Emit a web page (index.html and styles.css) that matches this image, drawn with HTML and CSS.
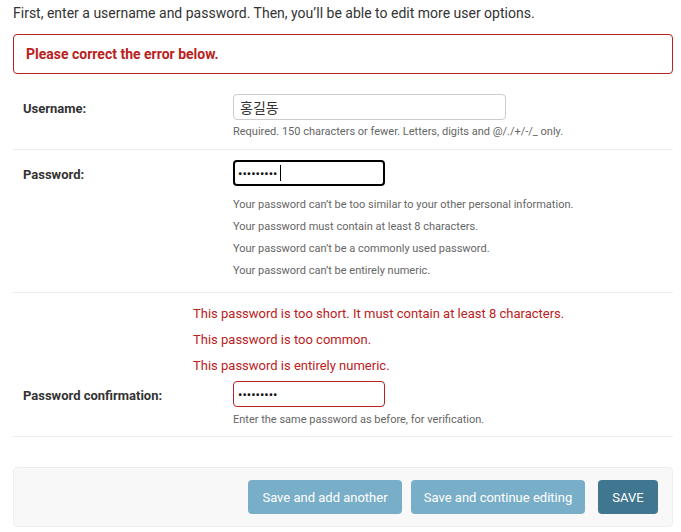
FILE: index.html
```html
<!DOCTYPE html>
<html>
<head>
<meta charset="utf-8">
<link rel="stylesheet" href="styles.css">
</head>
<body>
<div class="content">
  <p class="intro">First, enter a username and password. Then, you’ll be able to edit more user options.</p>
  <p class="errornote">Please correct the error below.</p>
  <fieldset class="module">
    <div class="form-row">
      <label class="field-label">Username:</label>
      <div class="field">
        <input class="text-input username" type="text" value="홍길동">
        <div class="help">Required. 150 characters or fewer. Letters, digits and @/./+/-/_ only.</div>
      </div>
    </div>
    <div class="form-row">
      <label class="field-label">Password:</label>
      <div class="field">
        <div class="input-wrap">
          <input class="text-input pw focused" type="password" value="123456789"><span class="caret"></span>
        </div>
        <ul class="help help-list">
          <li>Your password can’t be too similar to your other personal information.</li>
          <li>Your password must contain at least 8 characters.</li>
          <li>Your password can’t be a commonly used password.</li>
          <li>Your password can’t be entirely numeric.</li>
        </ul>
      </div>
    </div>
    <div class="form-row errors">
      <ul class="errorlist">
        <li>This password is too short. It must contain at least 8 characters.</li>
        <li>This password is too common.</li>
        <li>This password is entirely numeric.</li>
      </ul>
      <div class="row-inner">
        <label class="field-label">Password confirmation:</label>
        <div class="field">
          <input class="text-input pw error" type="password" value="123456789">
          <div class="help help-last">Enter the same password as before, for verification.</div>
        </div>
      </div>
    </div>
  </fieldset>
  <div class="submit-row">
    <button class="btn light w-add">Save and add another</button>
    <button class="btn light w-cont">Save and continue editing</button>
    <button class="btn default">SAVE</button>
  </div>
</div>
</body>
</html>
```
FILE: styles.css
```css
html, body {
  margin: 0;
  padding: 0;
  background: #fff;
  font-family: Roboto, "Liberation Sans", "Noto Sans CJK KR", sans-serif;
  color: #333;
}
.content {
  padding: 0 8px 0 13px;
}
.intro {
  margin: 0;
  padding-top: 4px;
  font-size: 14px;
  line-height: 18px;
  color: #333;
}
.errornote {
  margin: 12px 0 10px 0;
  border: 1px solid #ba2121;
  border-radius: 4px;
  color: #ba2121;
  font-size: 14px;
  font-weight: bold;
  padding: 11px 12px 11px 12px;
  line-height: 16px;
}
.module {
  border: none;
  margin: 0;
  padding: 0;
}
.form-row {
  display: flex;
  padding: 10px 10px;
  border-bottom: 1px solid #eee;
}
.form-row.errors {
  display: block;
}
.row-inner {
  display: flex;
}
.field-label {
  width: 210px;
  flex: none;
  font-size: 13px;
  font-weight: bold;
  color: #333;
  padding-top: 7px;
  line-height: 16px;
}
.field {
  display: flex;
  flex-direction: column;
  align-items: flex-start;
}
.text-input {
  box-sizing: border-box;
  height: 26px;
  border: 1px solid #ccc;
  border-radius: 4px;
  padding: 2px 4px;
  font-family: Roboto, "Noto Sans CJK KR", sans-serif;
  font-size: 13px;
  color: #333;
  outline: none;
  margin: 0;
}
.username {
  width: 273px;
  padding: 2px 6px;
  font-size: 14px;
}
.pw {
  width: 152px;
  font-size: 13px;
  color: #111;
}
.input-wrap {
  position: relative;
}
.focused {
  border: 2px solid #000;
  padding: 2px 3px;
}
.caret {
  position: absolute;
  left: 47px;
  top: 5px;
  width: 1px;
  height: 16px;
  background: #000;
}
.error {
  border-color: #ba2121;
}
.help {
  font-size: 11px;
  color: #666;
  line-height: 14px;
  margin-top: 5px;
}
.help-last {
  margin-top: 6px;
  margin-bottom: -1px;
}
.help-list {
  list-style: none;
  padding: 0;
  margin: 12px 0 0 0;
}
.help-list li {
  line-height: 14px;
  margin-bottom: 8px;
}
.help-list li:last-child {
  margin-bottom: 4px;
}
.errorlist {
  list-style: none;
  margin: 3px 0 7px 170px;
  padding: 0;
  color: #ba2121;
  font-size: 13px;
}
.errorlist li {
  line-height: 16px;
  margin-bottom: 10px;
}
.errorlist li:last-child {
  margin-bottom: 0;
}
.submit-row {
  margin-top: 30px;
  display: flex;
  justify-content: flex-end;
  gap: 9px;
  background: #f8f8f8;
  border: 1px solid #eee;
  border-radius: 4px;
  padding: 12px 14px 12px 12px;
}
.btn {
  border: none;
  border-radius: 4px;
  color: #fff;
  font-family: Roboto, "Liberation Sans", sans-serif;
  font-size: 13px;
  height: 34px;
  padding: 0;
  cursor: pointer;
  text-align: center;
}
.w-add {
  width: 154px;
}
.w-cont {
  width: 174px;
}
.btn.light {
  background: #79aec8;
}
.btn.default {
  background: #417690;
  width: 60px;
  margin-left: 4px;
}
```
